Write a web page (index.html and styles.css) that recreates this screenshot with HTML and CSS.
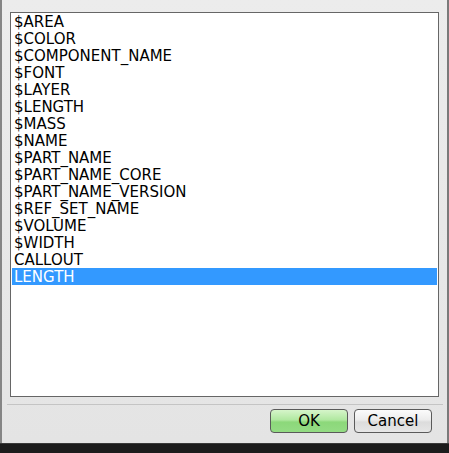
FILE: index.html
```html
<!DOCTYPE html>
<html>
<head>
<meta charset="utf-8">
<link rel="stylesheet" href="styles.css">
</head>
<body>
<div class="window">
  <div class="frame">
    <div class="list">
      <div class="row">$AREA</div>
      <div class="row">$COLOR</div>
      <div class="row">$COMPONENT_NAME</div>
      <div class="row">$FONT</div>
      <div class="row">$LAYER</div>
      <div class="row">$LENGTH</div>
      <div class="row">$MASS</div>
      <div class="row">$NAME</div>
      <div class="row">$PART_NAME</div>
      <div class="row">$PART_NAME_CORE</div>
      <div class="row">$PART_NAME_VERSION</div>
      <div class="row">$REF_SET_NAME</div>
      <div class="row">$VOLUME</div>
      <div class="row">$WIDTH</div>
      <div class="row">CALLOUT</div>
      <div class="row selected">LENGTH</div>
    </div>
    <div class="separator"></div>
    <div class="buttons">
      <button class="btn ok">OK</button>
      <button class="btn cancel">Cancel</button>
    </div>
  </div>
  <div class="bottombar"></div>
</div>
</body>
</html>
```

FILE: styles.css
```css
html, body {
  margin: 0;
  padding: 0;
  background: #1e1e1e;
}

.window {
  width: 449px;
  height: 453px;
  display: flex;
  flex-direction: column;
  font-family: "DejaVu Sans", sans-serif;
}

.frame {
  flex: 1;
  display: flex;
  flex-direction: column;
  border-left: 2px solid #858585;
  border-right: 2px solid #7a7a7a;
  background: linear-gradient(#ececec, #e4e4e4);
}

.list {
  margin: 12px 8px 0 8px;
  height: 383px;
  border: 1px solid #666666;
  background: #ffffff;
  padding: 0 1px;
  box-sizing: content-box;
}

.row {
  height: 17px;
  box-sizing: border-box;
  padding-top: 2px;
  line-height: 15px;
  font-size: 15px;
  padding-left: 2px;
  color: #000000;
  white-space: nowrap;
}

.row.selected {
  background: #3399ff;
  color: #ffffff;
}

.separator {
  height: 1px;
  margin: 7px 4px 0 5px;
  background: #c4c4c4;
}

.buttons {
  display: flex;
  justify-content: flex-end;
  gap: 6px;
  margin: 4px 15px 0 0;
}

.btn {
  width: 78px;
  height: 24px;
  border: 1px solid #5a5a5a;
  border-radius: 4px;
  font-family: "DejaVu Sans", sans-serif;
  font-size: 15px;
  color: #000000;
  padding: 0;
  line-height: 20px;
}

.btn.ok {
  background: linear-gradient(#d6f5ca 0%, #b0e8a0 45%, #8cd87a 55%, #94dc84 100%);
}

.btn.cancel {
  background: linear-gradient(#fbfbfb 0%, #ececec 45%, #dcdcdc 55%, #e6e6e6 100%);
}

.bottombar {
  height: 10px;
  background: #1c1c1c;
  border-top: 1px solid #3a3a3a;
  box-sizing: border-box;
}
```
